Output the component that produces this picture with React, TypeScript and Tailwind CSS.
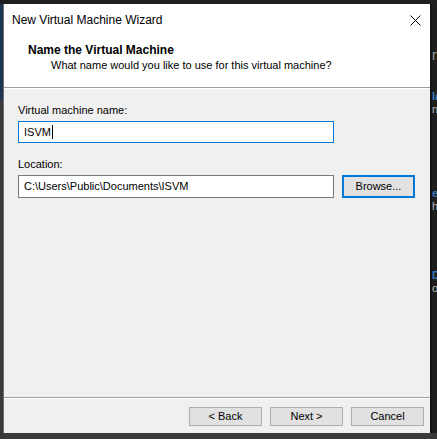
import React from 'react';

const font = { fontFamily: '"Liberation Sans", Arial, sans-serif' };

function WinButton({ children, focused }: { children: React.ReactNode; focused?: boolean }) {
    return (
        <div
            className={
                'w-full h-full flex items-center justify-center bg-[#e1e1e1] text-[11px] text-black leading-none ' +
                (focused ? 'border-2 border-[#0078d7]' : 'border border-[#adadad]')
            }
        >
            {children}
        </div>
    );
}

export default function App() {
    return (
        <div className="w-[437px] h-[439px] bg-[#1e1e1e] flex flex-col overflow-hidden" style={font}>
            {/* top strip of the window behind */}
            <div className="h-[4px] bg-[#1f1f1f] shrink-0" />

            <div className="flex h-[429px] shrink-0">
                {/* left edge of the window behind */}
                <div className="w-[3px] flex flex-col shrink-0">
                    <div className="h-[96px] bg-[#1b3552]" />
                    <div className="flex-1 bg-[#3a3a3a]" />
                </div>

                {/* dialog */}
                <div className="w-[427px] flex flex-col bg-[#f0f0f0] border-l border-[#6f6f6f]">
                    {/* title bar */}
                    <div className="h-[32px] bg-white flex items-center justify-between pl-[8px] pr-[9px]">
                        <span className="text-[12px] text-black">New Virtual Machine Wizard</span>
                        <svg width="11" height="11" viewBox="0 0 11 11" className="mt-[1px]">
                            <path d="M0.5 0.5 L10.5 10.5 M10.5 0.5 L0.5 10.5" stroke="#000" strokeWidth="1" />
                        </svg>
                    </div>

                    {/* header */}
                    <div className="h-[51px] bg-white flex flex-col pt-[6px] pl-[24px]">
                        <span className="text-[12px] font-bold text-black leading-[16px]">Name the Virtual Machine</span>
                        <span className="text-[11px] text-black leading-[14px] pl-[23px]">
                            What name would you like to use for this virtual machine?
                        </span>
                    </div>
                    <div className="h-px bg-[#a0a0a0]" />
                    <div className="h-px bg-white" />

                    {/* body */}
                    <div className="flex-1 flex flex-col px-[14px] pt-[14px]">
                        <span className="text-[11px] text-black leading-[15px]">Virtual machine name:</span>
                        <div className="mt-[3px] w-[316px] h-[22px] bg-white border border-[#0078d7] flex items-center pl-[5px]">
                            <span className="text-[11px] text-black leading-none">ISVM</span>
                            <span className="ml-px w-px h-[14px] bg-black" />
                        </div>

                        <span className="text-[11px] text-black leading-[15px] mt-[14px]">Location:</span>
                        <div className="mt-[3px] flex gap-[8px]">
                            <div className="w-[316px] h-[23px] bg-white border border-[#7a7a7a] flex items-center pl-[5px]">
                                <span className="text-[11px] text-black leading-none">C:\Users\Public\Documents\ISVM</span>
                            </div>
                            <div className="w-[73px] h-[23px]">
                                <WinButton focused>Browse...</WinButton>
                            </div>
                        </div>
                    </div>

                    {/* footer */}
                    <div className="h-px bg-[#a0a0a0]" />
                    <div className="h-px bg-white" />
                    <div className="h-[34px] flex justify-end gap-[8px] pr-[6px] pt-[8px]">
                        <div className="w-[73px] h-[19px]">
                            <WinButton>&lt; Back</WinButton>
                        </div>
                        <div className="w-[73px] h-[19px]">
                            <WinButton>Next &gt;</WinButton>
                        </div>
                        <div className="w-[73px] h-[19px]">
                            <WinButton>Cancel</WinButton>
                        </div>
                    </div>
                </div>

                {/* right edge: window behind showing through */}
                <div className="w-[7px] flex shrink-0">
                    <div className="w-[2px] bg-[#151515]" />
                    <div className="flex-1 flex flex-col overflow-hidden bg-[#1e1e1e] whitespace-nowrap text-[11px] leading-[13px]">
                        <span className="mt-[43px] text-[#9a9a9a] text-[14px] leading-[16px]">r</span>
                        <span className="mt-[27px] text-[#3b78b8] font-bold">la</span>
                        <span className="text-[#b8b8b8]">n</span>
                        <span className="mt-[71px] text-[#3b78b8] font-bold">e</span>
                        <span className="text-[#b8b8b8]">hi</span>
                        <span className="mt-[56px] text-[#3b78b8] font-bold">D</span>
                        <span className="text-[#b8b8b8]">os</span>
                    </div>
                </div>
            </div>

            <div className="flex-1 bg-[#3a3a3a]" />
        </div>
    );
}
